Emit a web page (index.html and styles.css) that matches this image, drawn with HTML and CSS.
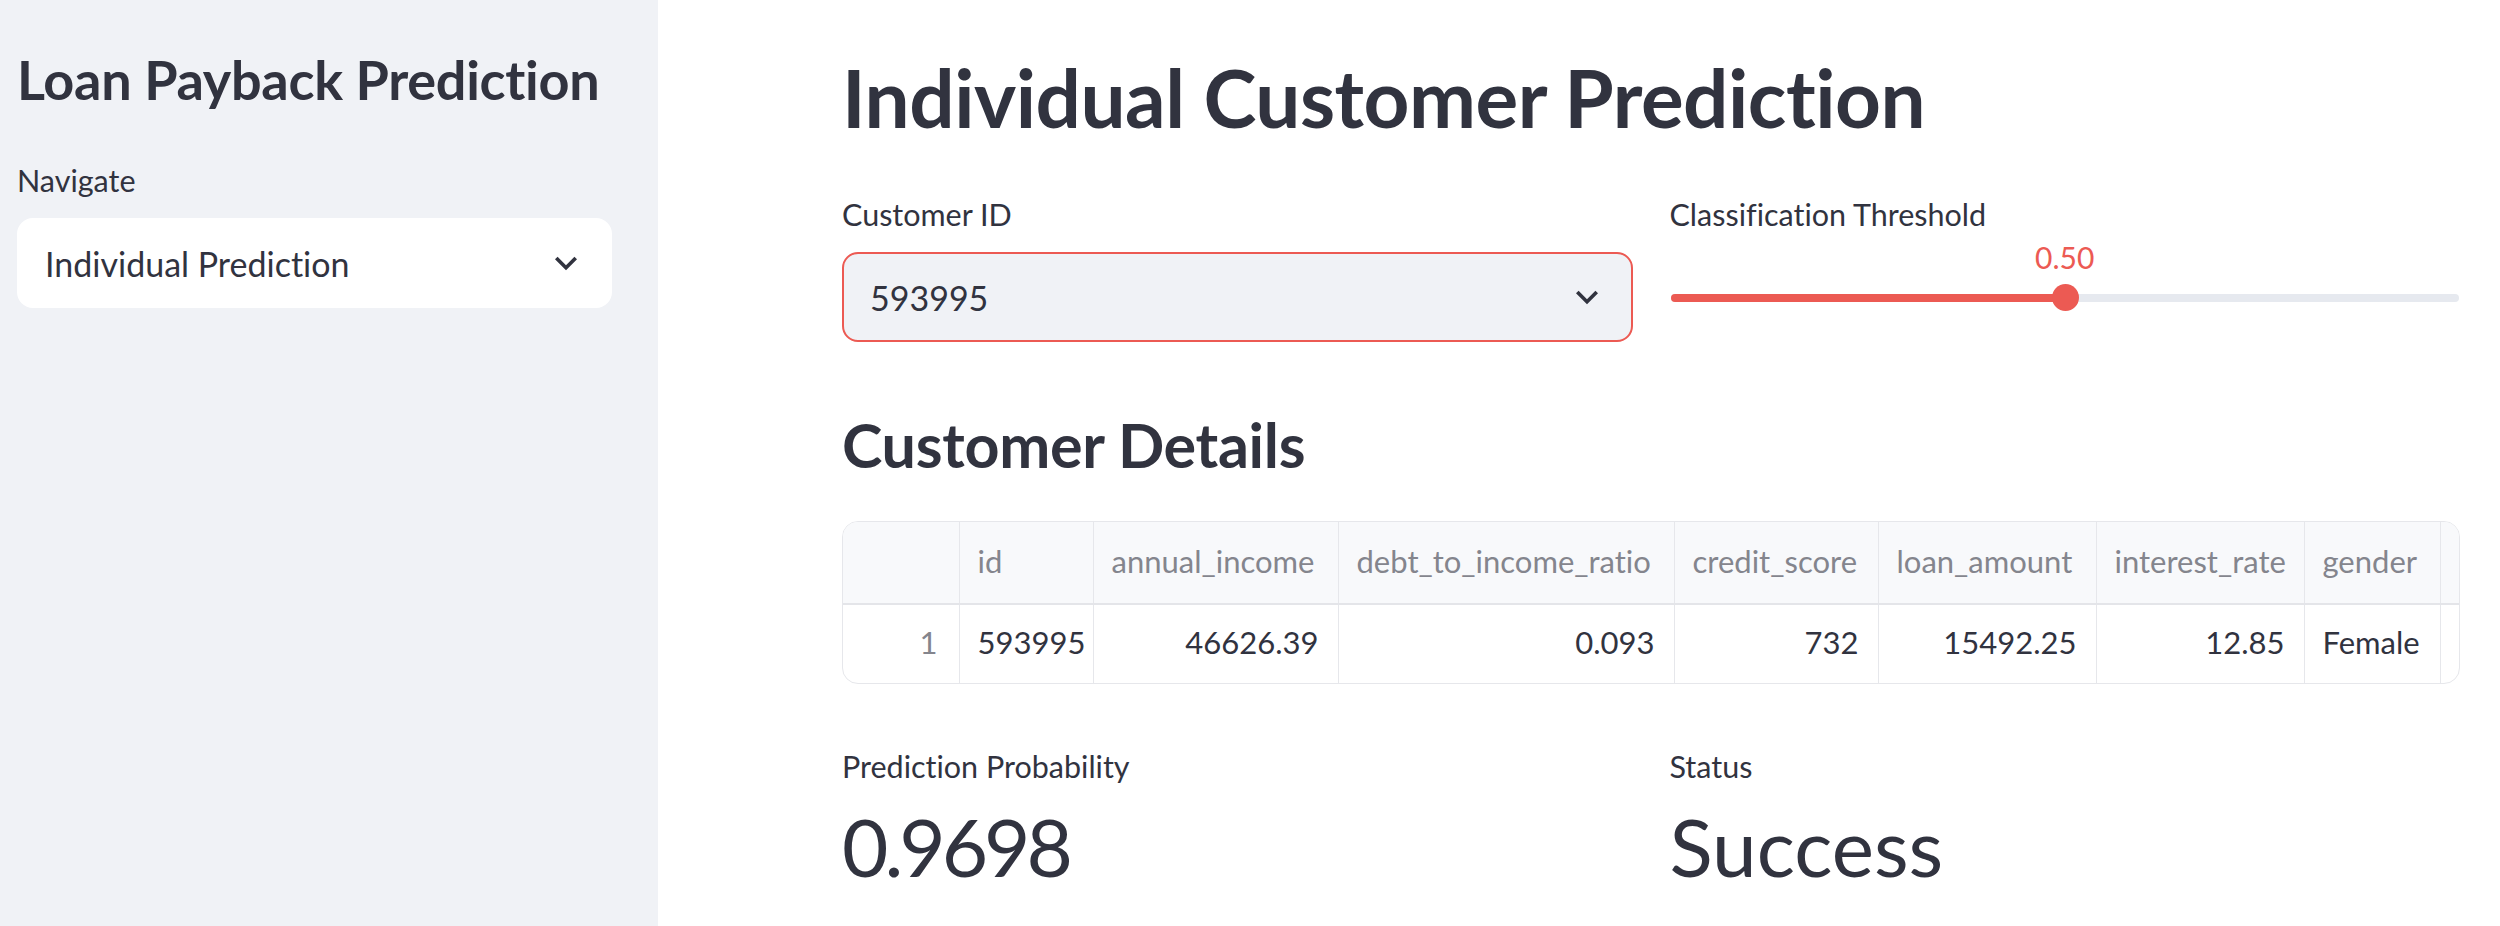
FILE: index.html
```html
<!DOCTYPE html>
<html lang="en">
<head>
<meta charset="utf-8">
<title>Loan Payback Prediction</title>
<link rel="stylesheet" href="styles.css">
</head>
<body>
<div class="app">
  <aside class="sidebar">
    <h1 class="side-title">Loan Payback Prediction</h1>
    <div class="field-label">Navigate</div>
    <div class="select select-white">
      <span class="select-text">Individual Prediction</span>
      <svg class="chev" viewBox="0 0 24 24"><path d="M16.59 8.59L12 13.17 7.41 8.59 6 10l6 6 6-6z"/></svg>
    </div>
  </aside>
  <main class="main">
    <h1 class="page-title">Individual Customer Prediction</h1>
    <div class="cols inputs">
      <div class="col">
        <div class="field-label">Customer ID</div>
        <div class="select select-focus">
          <span class="select-text">593995</span>
          <svg class="chev" viewBox="0 0 24 24"><path d="M16.59 8.59L12 13.17 7.41 8.59 6 10l6 6 6-6z"/></svg>
        </div>
      </div>
      <div class="col">
        <div class="field-label">Classification Threshold</div>
        <div class="slider">
          <div class="slider-area">
            <div class="slider-value" style="left:50%">0.50</div>
            <div class="track">
              <div class="fill" style="width:50%"></div>
            </div>
            <div class="thumb" style="left:50%"></div>
          </div>
        </div>
      </div>
    </div>
    <h2 class="section-title">Customer Details</h2>
    <div class="table-wrap">
      <table class="grid">
        <colgroup>
          <col class="c-idx"><col class="c-id"><col class="c-inc"><col class="c-dti"><col class="c-cs"><col class="c-la"><col class="c-ir"><col class="c-g"><col class="c-m">
        </colgroup>
        <thead>
          <tr>
            <th></th><th>id</th><th>annual_income</th><th>debt_to_income_ratio</th><th>credit_score</th><th>loan_amount</th><th>interest_rate</th><th>gender</th><th>marital_status</th>
          </tr>
        </thead>
        <tbody>
          <tr>
            <td class="idx">1</td><td>593995</td><td class="num">46626.39</td><td class="num">0.093</td><td class="num">732</td><td class="num">15492.25</td><td class="num">12.85</td><td>Female</td><td>Single</td>
          </tr>
        </tbody>
      </table>
    </div>
    <div class="cols metrics">
      <div class="col metric">
        <div class="metric-label">Prediction Probability</div>
        <div class="metric-value metric-number">0.9698</div>
      </div>
      <div class="col metric">
        <div class="metric-label">Status</div>
        <div class="metric-value">Success</div>
      </div>
    </div>
  </main>
</div>
</body>
</html>
```
FILE: styles.css
```css
* { box-sizing: border-box; }
html, body {
  margin: 0;
  padding: 0;
  background: #ffffff;
  color: #31333f;
  font-family: "Lato", "Noto Sans", sans-serif;
  font-variant-ligatures: none;
}
.app {
  display: flex;
  width: 2500px;
  height: 926px;
  overflow: hidden;
}
.sidebar {
  width: 658px;
  flex: none;
  background: #f0f2f6;
  padding: 49px 46px 0 17px;
}
.side-title {
  margin: 0;
  font-size: 54px;
  line-height: 62px;
  font-weight: 700;
  letter-spacing: -0.3px;
}
.field-label {
  font-size: 30.5px;
  line-height: 36px;
  font-weight: 400;
  margin: 0 0 20px;
}
.sidebar .field-label { margin-top: 51px; }
.select {
  height: 90px;
  border-radius: 16px;
  display: flex;
  align-items: center;
  justify-content: space-between;
  padding: 0 22px 0 26px;
  font-size: 34px;
}
.select-white { background: #ffffff; border: 2px solid #ffffff; }
.select-focus { background: #f0f2f6; border: 2px solid #ec5a53; }
.chev { width: 44px; height: 44px; fill: #31333f; }

.main {
  flex: 1;
  padding: 49px 40px 0 184px;
  min-width: 0;
}
.page-title {
  margin: 0;
  font-size: 80px;
  line-height: 96px;
  font-weight: 700;
  letter-spacing: -0.5px;
}
.cols {
  display: grid;
  grid-template-columns: 1fr 1fr;
  column-gap: 37px;
}
.inputs { margin-top: 51px; }

.slider-area {
  position: relative;
  height: 90px;
  margin: -16px 1px 0;
}
.slider-value {
  position: absolute;
  top: 3px;
  transform: translateX(-50%);
  font-size: 30px;
  line-height: 36px;
  color: #ec5a53;
}
.track {
  position: absolute;
  left: 0;
  right: 0;
  top: 58px;
  height: 8px;
  border-radius: 4px;
  background: #e6e9ef;
  overflow: hidden;
}
.fill {
  height: 100%;
  background: #ec5a53;
}
.thumb {
  position: absolute;
  top: 48px;
  width: 27px;
  height: 27px;
  margin-left: -13px;
  border-radius: 50%;
  background: #ec5a53;
}

.section-title {
  margin: 67px 0 0;
  font-size: 61px;
  line-height: 72px;
  font-weight: 700;
  letter-spacing: -0.3px;
}
.table-wrap {
  margin-top: 40px;
  border: 1px solid #e6e7eb;
  border-radius: 16px;
  overflow: hidden;
  width: 1618px;
}
.grid {
  border-collapse: collapse;
  table-layout: fixed;
  width: 1639px;
  font-size: 31px;
}
.c-idx { width: 116px; }
.c-id { width: 134px; }
.c-inc { width: 245px; }
.c-dti { width: 336px; }
.c-cs { width: 204px; }
.c-la { width: 218px; }
.c-ir { width: 208px; }
.c-g { width: 136px; }
.c-m { width: 42px; }
.grid th, .grid td {
  border-right: 1px solid #e6e7eb;
  white-space: nowrap;
  overflow: hidden;
  text-align: left;
  vertical-align: middle;
  padding: 0 19px 4px 18px;
}
.grid th {
  height: 82px;
  background: #f8f9fb;
  color: #84858d;
  font-weight: 400;
  border-bottom: 2px solid #e4e5e9;
}
.grid td {
  height: 79px;
  color: #31333f;
}
.grid td.num { text-align: right; }
.grid td.idx { text-align: right; color: #84858d; padding-right: 21px; }

.metrics { margin-top: 64px; }
.metric-label {
  font-size: 30.5px;
  line-height: 36px;
}
.metric-value {
  margin-top: 14px;
  font-size: 80px;
  line-height: 96px;
  font-weight: 400;
}
.metric-number { letter-spacing: -4px; }
```
